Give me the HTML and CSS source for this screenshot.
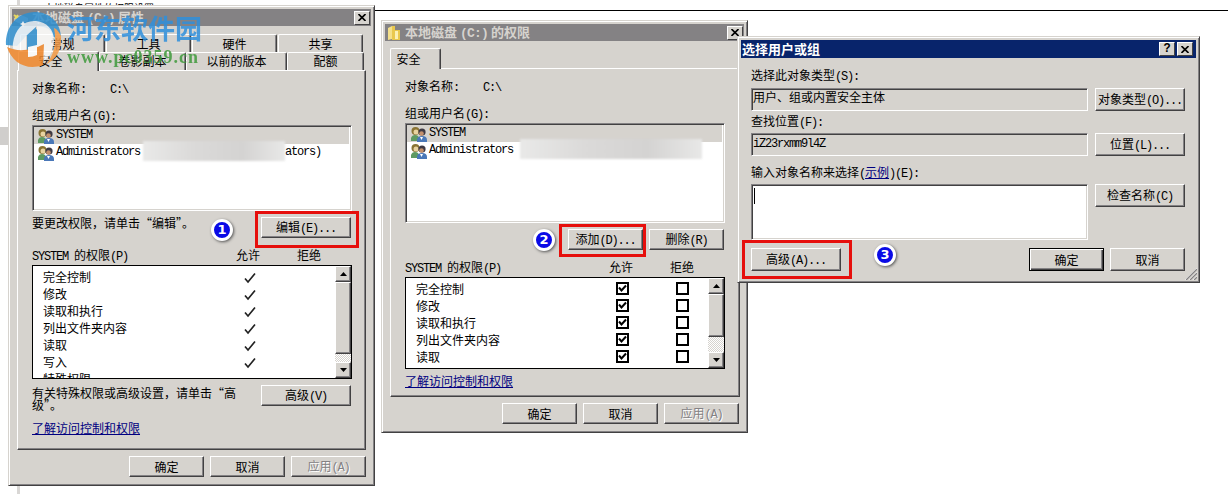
FILE: index.html
```html
<!DOCTYPE html>
<html lang="zh-CN">
<head>
    <meta charset="UTF-8">
    <title>本地磁盘 (C:) 属性</title>
    <link rel="stylesheet" href="styles.css">
</head>
<body>
    <svg class="defs" width="0" height="0">
        <symbol id="users" viewBox="0 0 16 16">
            <path d="M0 15V12Q1 9 4 9Q8 9 8 13V15Z" fill="#5f9a62"/>
            <circle cx="4.500" cy="5" r="4" fill="#8a7434"/>
            <circle cx="5" cy="6" r="2.500" fill="#e8d3a0"/>
            <path d="M6 16V13Q7 10 11 10Q16 10 16 14V16Z" fill="#4a78b8"/>
            <circle cx="11" cy="6" r="3.600" fill="#3e3a44"/>
            <circle cx="10.500" cy="7.500" r="2.300" fill="#c4906c"/>
            <path d="M9 11L10.500 14L12 11Z" fill="#fff"/>
        </symbol>
        <symbol id="check" viewBox="0 0 12 12">
            <path d="M1 6.500L4 10L11 1.500" fill="none" stroke="#222" stroke-width="1.700"/>
        </symbol>
        <symbol id="tick" viewBox="0 0 9 9">
            <path d="M1 3.500L3.500 6.500L8 1.500" fill="none" stroke="#000" stroke-width="2"/>
        </symbol>
        <symbol id="up" viewBox="0 0 7 4"><path d="M0 4L3.500 0L7 4Z"/></symbol>
        <symbol id="down" viewBox="0 0 7 4"><path d="M0 0L3.500 4L7 0Z"/></symbol>
        <symbol id="close" viewBox="0 0 8 7">
            <path d="M.5 0L7.500 7M7.500 0L.5 7" stroke="#000" stroke-width="1.600"/>
        </symbol>
    </svg>

    <div class="desktop">
        <div class="side-line"></div>
        <div class="side-mark"></div>
        <div class="top-line"></div>
        <div class="behind">本地磁盘属性的权限设置</div>

        <!-- disk properties -->
        <div class="window props">
            <div class="title">
                <svg class="title-icon" viewBox="0 0 16 16"><path d="M1 8L8 5L15 8V11L8 14L1 11Z" fill="#b8bcc0"/><path d="M1 5L5 8M5 5L2 9" stroke="#e8d860" stroke-width="2"/></svg>
                <span>本地磁盘 <i class="en">(C:)</i> 属性</span>
                <button class="sys"><svg width="8" height="7"><use href="#close"/></svg></button>
            </div>
            <div class="tabs back">
                <div class="tab">常规</div>
                <div class="tab">工具</div>
                <div class="tab">硬件</div>
                <div class="tab">共享</div>
            </div>
            <div class="tabs front">
                <div class="tab active">安全</div>
                <div class="tab">卷影副本</div>
                <div class="tab">以前的版本</div>
                <div class="tab">配额</div>
            </div>
            <div class="panel">
                <div class="line object">对象名称<i class="en">:</i><i class="en path">C:\</i></div>
                <div class="line group">组或用户名<i class="en">(G):</i></div>
                <div class="listbox">
                    <div class="user selected"><svg><use href="#users"/></svg><i class="en">SYSTEM</i></div>
                    <div class="user"><svg><use href="#users"/></svg><i class="en">Administrators</i><span class="smudge"></span><i class="en">ators)</i></div>
                </div>
                <div class="edit-row">
                    <span>要更改权限，请单击“编辑”。</span>
                    <span class="badge">1</span>
                    <div class="mark"><button class="btn wide">编辑<i class="en">(E)...</i></button></div>
                </div>
                <div class="perm-head"><span><i class="en">SYSTEM </i>的权限<i class="en">(P)</i></span><b>允许</b><b>拒绝</b></div>
                <div class="perms">
                    <div class="rows">
                        <div class="perm"><span>完全控制</span><svg><use href="#check"/></svg></div>
                        <div class="perm"><span>修改</span><svg><use href="#check"/></svg></div>
                        <div class="perm"><span>读取和执行</span><svg><use href="#check"/></svg></div>
                        <div class="perm"><span>列出文件夹内容</span><svg><use href="#check"/></svg></div>
                        <div class="perm"><span>读取</span><svg><use href="#check"/></svg></div>
                        <div class="perm"><span>写入</span><svg><use href="#check"/></svg></div>
                        <div class="perm"><span>特殊权限</span></div>
                    </div>
                    <div class="scroll">
                        <div class="arrow"><svg><use href="#up"/></svg></div>
                        <div class="thumb"></div>
                        <div class="arrow"><svg><use href="#down"/></svg></div>
                    </div>
                </div>
                <div class="adv-row">
                    <span>有关特殊权限或高级设置，请单击“高<br>级”。</span>
                    <button class="btn wide">高级<i class="en">(V)</i></button>
                </div>
                <a class="link">了解访问控制和权限</a>
            </div>
            <div class="actions">
                <button class="btn">确定</button>
                <button class="btn">取消</button>
                <button class="btn disabled">应用<i class="en">(A)</i></button>
            </div>
        </div>

        <!-- permissions -->
        <div class="window access">
            <div class="title">
                <svg class="title-icon" viewBox="0 0 16 16"><path d="M2 3L6 1V14L2 15Z" fill="#f5e08a"/><path d="M6 1H9V5H14V15H6Z" fill="#e9c84e"/><path d="M9 6H12V14H9Z" fill="#fbf0b4"/></svg>
                <span>本地磁盘 <i class="en">(C:)</i> 的权限</span>
                <button class="sys"><svg width="8" height="7"><use href="#close"/></svg></button>
            </div>
            <div class="tabs front">
                <div class="tab active">安全</div>
            </div>
            <div class="panel">
                <div class="line object">对象名称<i class="en">:</i><i class="en path">C:\</i></div>
                <div class="line group">组或用户名<i class="en">(G):</i></div>
                <div class="listbox">
                    <div class="user selected"><svg><use href="#users"/></svg><i class="en">SYSTEM</i></div>
                    <div class="user"><svg><use href="#users"/></svg><i class="en">Administrators</i><span class="smudge"></span></div>
                </div>
                <div class="edit-row">
                    <span class="badge">2</span>
                    <div class="mark"><button class="btn">添加<i class="en">(D)...</i></button></div>
                    <button class="btn">删除<i class="en">(R)</i></button>
                </div>
                <div class="perm-head"><span><i class="en">SYSTEM </i>的权限<i class="en">(P)</i></span><b>允许</b><b>拒绝</b></div>
                <div class="perms">
                    <div class="rows">
                        <div class="perm"><span>完全控制</span><i class="box"><svg><use href="#tick"/></svg></i><i class="box"></i></div>
                        <div class="perm"><span>修改</span><i class="box"><svg><use href="#tick"/></svg></i><i class="box"></i></div>
                        <div class="perm"><span>读取和执行</span><i class="box"><svg><use href="#tick"/></svg></i><i class="box"></i></div>
                        <div class="perm"><span>列出文件夹内容</span><i class="box"><svg><use href="#tick"/></svg></i><i class="box"></i></div>
                        <div class="perm"><span>读取</span><i class="box"><svg><use href="#tick"/></svg></i><i class="box"></i></div>
                    </div>
                    <div class="scroll">
                        <div class="arrow"><svg><use href="#up"/></svg></div>
                        <div class="thumb"></div>
                        <div class="arrow"><svg><use href="#down"/></svg></div>
                    </div>
                </div>
                <a class="link">了解访问控制和权限</a>
            </div>
            <div class="actions">
                <button class="btn">确定</button>
                <button class="btn">取消</button>
                <button class="btn disabled">应用<i class="en">(A)</i></button>
            </div>
        </div>

        <!-- select users or groups -->
        <div class="window select">
            <div class="title">
                <span>选择用户或组</span>
                <button class="sys">?</button>
                <button class="sys"><svg width="8" height="7"><use href="#close"/></svg></button>
            </div>
            <div class="form">
                <label>选择此对象类型<i class="en">(S):</i></label>
                <div class="field">用户、组或内置安全主体</div>
                <button class="btn wide">对象类型<i class="en">(O)...</i></button>
                <label>查找位置<i class="en">(F):</i></label>
                <div class="field"><i class="en">iZ23rxmm9l4Z</i></div>
                <button class="btn wide">位置<i class="en">(L)...</i></button>
                <label>输入对象名称来选择<i class="en">(</i><a class="link">示例</a><i class="en">)(E):</i></label>
                <div class="field area"><span class="caret"></span></div>
                <button class="btn wide">检查名称<i class="en">(C)</i></button>
            </div>
            <div class="foot">
                <div class="mark"><button class="btn wide">高级<i class="en">(A)...</i></button></div>
                <span class="badge">3</span>
                <button class="btn default">确定</button>
                <button class="btn">取消</button>
            </div>
            <svg class="grip" viewBox="0 0 12 12"><path d="M0 12L12 0M4 12L12 4M8 12L12 8" stroke="#fff"/><path d="M1 12L12 1M5 12L12 5M9 12L12 9" stroke="#848284" stroke-width="1.300"/></svg>
        </div>

        <div class="watermark">
            <svg viewBox="0 0 58 58">
                <path d="M1 36C0 17 13 3 30 3C45 3 56 14 56 29L48 28C47 22 44 19 38 18L31 17V44L22 46V26L12 37Z" fill="#2f8fd0"/>
                <path d="M8 34C10 20 19 11 31 12C42 13 49 21 49 31C49 43 43 51 34 54L32 46V17L21 27V45L14 47C9 43 7 39 8 34Z" fill="#fff" opacity=".85"/>
                <path d="M23 26L32 20V46L23 48Z" fill="#2f8fd0"/>
                <path d="M2 38C12 43 26 42 39 35L38 56C22 62 7 54 2 38Z" fill="#f0872a"/>
                <path d="M23 38L32 36V46Q28 48 23 48Z" fill="#fff"/>
                <path d="M40 56C52 50 57 41 56 27C54 23 52 20 49 19C52 34 49 47 40 56Z" fill="#f39a45"/>
                <path d="M18 12L19 14L21 15L19 16L18 18L17 16L15 15L17 14Z" fill="#fff"/>
            </svg>
            <div class="words">
                <div class="site">河东软件园</div>
                <div class="url">www.pc0359.cn</div>
            </div>
        </div>
    </div>
</body>
</html>
```
FILE: styles.css
```css
* {
    margin: 0;
    padding: 0;
    box-sizing: border-box;
}
body {
    width: 1228px;
    height: 494px;
    overflow: hidden;
    background: #fff;
    font-family: "Noto Sans CJK SC", sans-serif;
    font-size: 12px;
    line-height: 12px;
    color: #000;
}
i {
    font-style: normal;
}
.en {
    font-family: "Liberation Mono", monospace;
    letter-spacing: -1.2px;
    white-space: pre;
}
.defs {
    position: absolute;
}
.desktop {
    position: relative;
    width: 1228px;
    height: 494px;
    overflow: hidden;
}
.side-line {
    position: absolute;
    left: 17px;
    top: 0;
    width: 3px;
    height: 494px;
    background: #d9d7d5;
}
.side-mark {
    position: absolute;
    left: 0;
    top: 127px;
    width: 9px;
    height: 18px;
    background: #d0cecc;
}
.top-line {
    position: absolute;
    left: 370px;
    right: 0;
    top: 10px;
    height: 1px;
    background: #000;
}
.behind {
    position: absolute;
    left: 44px;
    top: 2px;
    font-size: 10px;
}

/* windows */
.window {
    position: absolute;
    background: #d6d3ce;
    border: 1px solid;
    border-color: #d6d3ce #424142 #424142 #d6d3ce;
    box-shadow: inset 1px 1px #fff, inset -1px -1px #848284;
    padding: 3px;
}
.props {
    left: 8px;
    top: 5px;
    width: 367px;
    height: 481px;
}
.access {
    left: 381px;
    top: 20px;
    width: 367px;
    height: 413px;
}
.select {
    left: 737px;
    top: 36px;
    width: 463px;
    height: 247px;
    z-index: 2;
}
.title {
    display: flex;
    align-items: center;
    height: 17px;
    padding-right: 1px;
    background: #848284;
    color: #d6d3ce;
    font-size: 13px;
    font-weight: bold;
    line-height: 16px;
}
.title span {
    flex: 1;
    white-space: nowrap;
}
.title .en {
    letter-spacing: -0.8px;
}
.title-icon {
    width: 16px;
    height: 16px;
    margin: 0 3px 0 1px;
}
.select .title {
    height: 18px;
    padding: 0 3px 0 1px;
    background: #08246b;
    color: #fff;
}
.sys {
    display: flex;
    align-items: center;
    justify-content: center;
    width: 16px;
    height: 14px;
    background: #d6d3ce;
    border: 1px solid;
    border-color: #fff #424142 #424142 #fff;
    font: bold 12px/12px "Liberation Mono", monospace;
}
.sys + .sys {
    margin-left: 2px;
}

/* tabs */
.tabs {
    display: flex;
}
.tab {
    display: flex;
    align-items: center;
    justify-content: center;
    border: 1px solid;
    border-color: #fff #424142 transparent #fff;
    border-bottom: none;
    border-radius: 2px 2px 0 0;
    box-shadow: inset -1px 0 #848284;
}
.back {
    gap: 1px;
    height: 18px;
    margin: 8px 0 0 8px;
}
.back .tab {
    width: 85px;
}
.props .front {
    height: 18px;
    margin-left: 6px;
    align-items: flex-end;
}
.props .front .tab {
    height: 18px;
    width: 87px;
    padding-bottom: 2px;
}
.props .front .tab:nth-child(3) {
    width: 101px;
}
.props .front .tab:nth-child(4) {
    width: 77px;
}
.props .front .active {
    width: 81px;
    height: 20px;
    padding-right: 16px;
}
.access .front {
    height: 20px;
    margin: 7px 0 0 5px;
}
.access .active {
    width: 51px;
    padding-right: 14px;
}
.tab.active {
    position: relative;
    background: #d6d3ce;
    margin-bottom: -1px;
    z-index: 1;
}
.panel {
    border: 1px solid;
    border-color: #fff #424142 #424142 #fff;
    box-shadow: inset -1px -1px #848284;
}
.props .panel {
    width: 349px;
    height: 380px;
    margin-left: 5px;
    padding: 11px 14px 0;
}
.access .panel {
    width: 350px;
    height: 329px;
    margin-left: 5px;
    padding: 11px 14px 0;
}
.line {
    height: 12px;
}
.path {
    margin-left: 24px;
}
.group {
    margin-top: 15px;
}

/* user list */
.listbox {
    width: 320px;
    border: 1px solid;
    border-color: #848284 #fff #fff #848284;
    box-shadow: inset 1px 1px #424142, inset -1px -1px #d6d3ce;
    background: #fff;
    padding: 1px 2px 0 1px;
    margin-top: 4px;
}
.props .listbox {
    height: 86px;
}
.access .listbox {
    height: 100px;
}
.user {
    display: flex;
    align-items: center;
    height: 17px;
    padding-left: 4px;
}
.user svg {
    width: 16px;
    height: 16px;
    margin-right: 2px;
}
.user .en {
    margin-top: -2px;
}
.selected {
    background: #d6d3ce;
}
.smudge {
    width: 142px;
    height: 20px;
    margin: -4px 0 0 3px;
    background: linear-gradient(90deg, #e9e9e8, #dbdad9 35%, #d4d3d2 70%, #e8e8e7);
    filter: blur(1px);
}
.access .smudge {
    width: 182px;
    margin-left: 7px;
}

/* buttons */
.btn {
    width: 75px;
    height: 21px;
    flex: none;
    background: #d6d3ce;
    border: 1px solid;
    border-color: #fff #424142 #424142 #fff;
    box-shadow: inset -1px -1px #848284;
    font: inherit;
    color: #000;
    white-space: nowrap;
}
.wide {
    width: 90px;
}
.disabled {
    color: #848284;
    text-shadow: 1px 1px #fff;
}
.default {
    border-color: #000;
    box-shadow: inset 1px 1px #fff, inset -1px -1px #424142, inset -2px -2px #848284;
}
.mark {
    flex: none;
    border: 3px solid #e60f0c;
}
.badge {
    flex: none;
    width: 22px;
    height: 22px;
    border: 3px solid #fff;
    border-radius: 50%;
    background: #0a0ae6;
    box-shadow: 1px 1px 3px #555;
    color: #fff;
    font: bold 13px/16px "DejaVu Sans", sans-serif;
    text-align: center;
}
.edit-row {
    display: flex;
}
.props .edit-row {
    height: 37px;
}
.props .edit-row > span:first-child {
    flex: none;
    width: 179px;
    padding-top: 6px;
    white-space: nowrap;
}
.props .badge {
    margin: 8px 22px 0 0;
}
.props .mark {
    width: 104px;
    height: 37px;
    padding: 3px 0 0 3px;
}
.access .edit-row {
    height: 33px;
    margin-top: 1px;
    padding-left: 128px;
}
.access .badge {
    margin: 5px 4px 0 0;
}
.access .mark {
    width: 87px;
    height: 33px;
    padding: 2px 0 0 6px;
}
.access .edit-row > .btn {
    margin: 5px 0 0 3px;
}

/* permissions */
.perm-head {
    display: flex;
}
.perm-head span {
    flex: none;
    width: 204px;
}
.perm-head b {
    flex: none;
    width: 61px;
    font-weight: normal;
}
.props .perm-head {
    margin-top: 1px;
}
.access .perm-head {
    margin-top: 4px;
}
.perms {
    display: flex;
    width: 320px;
    border: 1px solid #000;
    background: #fff;
    margin-top: 2px;
    overflow: hidden;
}
.props .perms {
    height: 114px;
}
.access .perms {
    height: 92px;
}
.rows {
    flex: 1;
    min-width: 0;
    padding: 2px 0 0 10px;
}
.perm {
    display: flex;
    align-items: center;
    height: 17px;
}
.perm span {
    flex: none;
    width: 200px;
}
.perm > svg {
    width: 12px;
    height: 12px;
    margin: 2px 0 0 1px;
}
.box {
    display: flex;
    flex: none;
    align-items: center;
    justify-content: center;
    width: 13px;
    height: 13px;
    border: 2px solid #000;
    margin-right: 47px;
}
.box svg {
    flex: none;
    width: 9px;
    height: 9px;
}
.scroll {
    display: flex;
    flex: none;
    flex-direction: column;
    width: 16px;
    background: repeating-conic-gradient(#fff 0 25%, #d6d3ce 0 50%) 0 0 / 2px 2px;
}
.arrow,
.thumb {
    background: #d6d3ce;
    border: 1px solid;
    border-color: #fff #424142 #424142 #fff;
    box-shadow: inset -1px -1px #848284;
}
.arrow {
    display: flex;
    align-items: center;
    justify-content: center;
    height: 16px;
    flex: none;
}
.arrow svg {
    width: 7px;
    height: 4px;
}
.arrow:last-child {
    margin-top: auto;
}
.props .thumb {
    height: 72px;
}
.access .thumb {
    height: 43px;
}
.adv-row {
    display: flex;
    padding-top: 6px;
    white-space: nowrap;
}
.adv-row span {
    flex: none;
    width: 229px;
    padding-top: 2px;
}
.link {
    color: #000080;
    text-decoration: underline;
    text-underline-offset: 1px;
}
.panel > .link {
    display: block;
    width: 108px;
}
.props .panel > .link {
    margin-top: 11px;
}
.access .panel > .link {
    margin-top: 6px;
}
.actions {
    display: flex;
    justify-content: flex-end;
    gap: 6px;
    padding: 6px 5px 0 0;
}

/* select form */
.form {
    display: grid;
    grid-template-columns: 337px 90px;
    column-gap: 7px;
    padding: 11px 0 0 10px;
}
.form label {
    grid-column: 1 / 3;
    height: 12px;
    margin: 0 0 7px;
    white-space: nowrap;
}
.form label:nth-of-type(2) {
    margin: 4px 0 6px;
}
.form label:nth-of-type(3) {
    margin: 10px 0 6px;
}
.field {
    height: 23px;
    padding: 2px 1px;
    border: 1px solid;
    border-color: #848284 #fff #fff #848284;
    box-shadow: inset 1px 1px #424142;
}
.form .btn {
    height: 23px;
}
.area {
    height: 56px;
    background: #fff;
    padding: 3px 2px;
    box-shadow: inset 1px 1px #424142, inset -1px -1px #d6d3ce;
}
.caret {
    display: block;
    width: 1px;
    height: 16px;
    background: #000;
}
.foot {
    display: flex;
    padding-left: 1px;
}
.foot .mark {
    width: 110px;
    height: 39px;
    padding: 5px 0 0 6px;
}
.foot .btn {
    height: 23px;
}
.foot > .btn {
    margin: 8px 6px 0 0;
}
.foot .badge {
    margin: 4px 133px 0 22px;
}
.grip {
    position: absolute;
    right: 2px;
    bottom: 2px;
    width: 12px;
    height: 12px;
}

/* watermark */
.watermark {
    position: absolute;
    left: 5px;
    top: 9px;
    z-index: 3;
    display: flex;
    opacity: .85;
}
.watermark svg {
    width: 58px;
    height: 58px;
}
.words {
    padding: 5px 0 0 4px;
}
.site {
    font-size: 27px;
    font-weight: bold;
    line-height: 28px;
    color: #2f8fdc;
    white-space: nowrap;
}
.url {
    margin-top: 6px;
    font: bold 18px/18px "Liberation Serif", serif;
    letter-spacing: 1px;
    color: #3f9a3c;
}
```
